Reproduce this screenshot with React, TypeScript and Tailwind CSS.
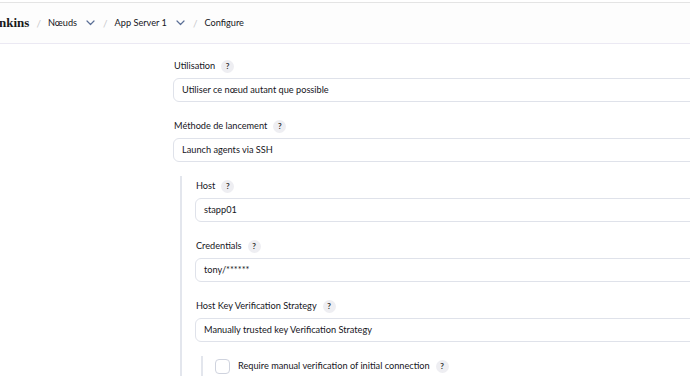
import React from 'react';

const HelpIcon: React.FC = () => (
    <span className="ml-[6px] inline-flex h-[13px] w-[13px] items-center justify-center rounded-full bg-[#eeeef2] text-[8px] font-bold leading-none text-[#333]">
        ?
    </span>
);

const Chevron: React.FC = () => (
    <svg width="9" height="6" viewBox="0 0 9 6" className="ml-[9px] mr-[1px]">
        <path d="M1 1l3.5 3.5L8 1" fill="none" stroke="#5b6f96" strokeWidth="1.2" strokeLinecap="round" strokeLinejoin="round" />
    </svg>
);

const Sep: React.FC = () => <span className="mx-[7px] text-[10px] text-[#c8c8cc]">/</span>;

interface FieldProps {
    label: string;
    value: string;
}

const Field: React.FC<FieldProps> = ({ label, value }) => (
    <div className="mb-[14px]">
        <div className="flex h-[20px] items-center pl-[1px] text-[9.2px] text-[#16161c]">
            {label}
            <HelpIcon />
        </div>
        <div className="mt-[2px] flex h-[24px] items-center rounded-[6px] border border-[#dfe2ea] bg-white pl-[8px] text-[9.2px] text-[#16161c]">
            {value}
        </div>
    </div>
);

export default function App() {
    return (
        <div className="h-[378px] w-[690px] overflow-hidden bg-white font-['Lato',sans-serif]">
            <div className="pt-[2px]">
                <div className="flex h-[42px] items-center border-t border-b border-t-[#e4e4e4] border-b-[#ebe9f3] bg-[#fdfdfd]">
                    <span className="ml-[-1px] font-['Liberation_Serif',serif] text-[13px] font-bold text-[#1a1a1a]">nkins</span>
                    <Sep />
                    <span className="text-[9.2px] text-[#16161c]">Nœuds</span>
                    <Chevron />
                    <Sep />
                    <span className="text-[9.2px] text-[#16161c]">App Server 1</span>
                    <Chevron />
                    <Sep />
                    <span className="text-[9.2px] text-[#16161c]">Configure</span>
                </div>
            </div>

            <div className="ml-[173px] w-[560px] pt-[12px]">
                <Field label="Utilisation" value="Utiliser ce nœud autant que possible" />
                <Field label="Méthode de lancement" value="Launch agents via SSH" />

                <div className="ml-[7px] border-l-2 border-[#e3e6ed] pl-[13px]">
                    <Field label="Host" value="stapp01" />
                    <Field label="Credentials" value="tony/******" />
                    <Field label="Host Key Verification Strategy" value="Manually trusted key Verification Strategy" />

                    <div className="ml-[6px] border-l-2 border-[#e3e6ed] pl-[12px]">
                        <label className="flex h-[20px] items-center text-[9.2px] text-[#16161c]">
                            <span className="mr-[8px] inline-block h-[15px] w-[15px] rounded-[4px] border border-[#cfd3de] bg-white" />
                            Require manual verification of initial connection
                            <HelpIcon />
                        </label>
                    </div>
                </div>
            </div>
        </div>
    );
}
